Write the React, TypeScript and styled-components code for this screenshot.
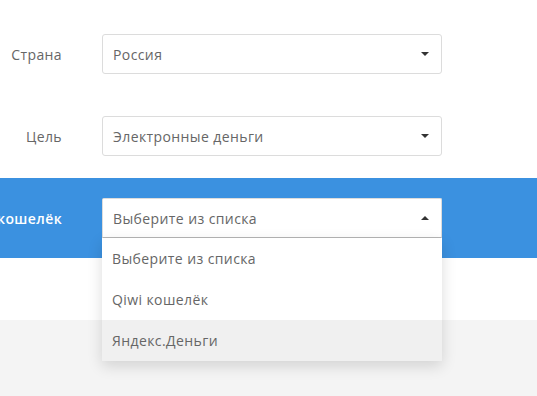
import React from "react";
import styled, { createGlobalStyle } from "styled-components";

const Global = createGlobalStyle`
  html, body { margin: 0; padding: 0; background: #ffffff; }
  body { font-family: "Open Sans", "Noto Sans", sans-serif; letter-spacing: 0.4px; }
`;

const Page = styled.div`
  width: 537px;
  height: 396px;
  overflow: hidden;
  display: flex;
  flex-direction: column;
  background: #ffffff;
`;

const Form = styled.div`
  padding-top: 14px;
  display: flex;
  flex-direction: column;
  gap: 2px;
`;

const Row = styled.div<{ $active?: boolean }>`
  height: 80px;
  display: flex;
  align-items: center;
  gap: 40px;
  background: ${(p) => (p.$active ? "#3b91e0" : "transparent")};
  position: relative;
  z-index: ${(p) => (p.$active ? 2 : 1)};
`;

const Label = styled.div<{ $active?: boolean }>`
  width: 62px;
  flex: none;
  display: flex;
  justify-content: flex-end;
  white-space: nowrap;
  font-size: 14px;
  color: ${(p) => (p.$active ? "#ffffff" : "#666666")};
  font-weight: ${(p) => (p.$active ? 600 : 400)};
`;

const SelectWrap = styled.div`
  position: relative;
  width: 340px;
`;

const Select = styled.div<{ $open?: boolean }>`
  box-sizing: border-box;
  height: 40px;
  display: flex;
  align-items: center;
  justify-content: space-between;
  padding: 0 10px 0 10px;
  background: #ffffff;
  border: 1px solid #dcdcdc;
  border-bottom-color: ${(p) => (p.$open ? "#b5b5b5" : "#dcdcdc")};
  border-radius: ${(p) => (p.$open ? "2px 2px 0 0" : "3px")};
  font-size: 14px;
  color: #666666;
`;

const Caret = styled.span<{ $up?: boolean }>`
  width: 0;
  height: 0;
  border-left: 4px solid transparent;
  border-right: 4px solid transparent;
  ${(p) =>
    p.$up
      ? "border-bottom: 4px solid #333;"
      : "border-top: 4px solid #333;"}
  margin-right: 2px;
`;

const Menu = styled.ul`
  position: absolute;
  top: 40px;
  left: 0;
  right: 0;
  margin: 0;
  padding: 0;
  list-style: none;
  background: #ffffff;
  box-shadow: 0 5px 14px rgba(0, 0, 0, 0.14);
`;

const Option = styled.li<{ $hover?: boolean }>`
  height: 41px;
  display: flex;
  align-items: center;
  padding: 0 10px;
  font-size: 14px;
  color: #666666;
  background: ${(p) => (p.$hover ? "#f0f0f0" : "#ffffff")};
`;

const Spacer = styled.div`
  height: 62px;
  flex: none;
`;

const Footer = styled.div`
  flex: 1;
  background: #f4f4f4;
`;

export default function App() {
  return (
    <Page>
      <Global />
      <Form>
        <Row>
          <Label>Страна</Label>
          <SelectWrap>
            <Select>
              Россия
              <Caret />
            </Select>
          </SelectWrap>
        </Row>
        <Row>
          <Label>Цель</Label>
          <SelectWrap>
            <Select>
              Электронные деньги
              <Caret />
            </Select>
          </SelectWrap>
        </Row>
        <Row $active>
          <Label $active>Электронный кошелёк</Label>
          <SelectWrap>
            <Select $open>
              Выберите из списка
              <Caret $up />
            </Select>
            <Menu>
              <Option>Выберите из списка</Option>
              <Option>Qiwi кошелёк</Option>
              <Option $hover>Яндекс.Деньги</Option>
            </Menu>
          </SelectWrap>
        </Row>
      </Form>
      <Spacer />
      <Footer />
    </Page>
  );
}
